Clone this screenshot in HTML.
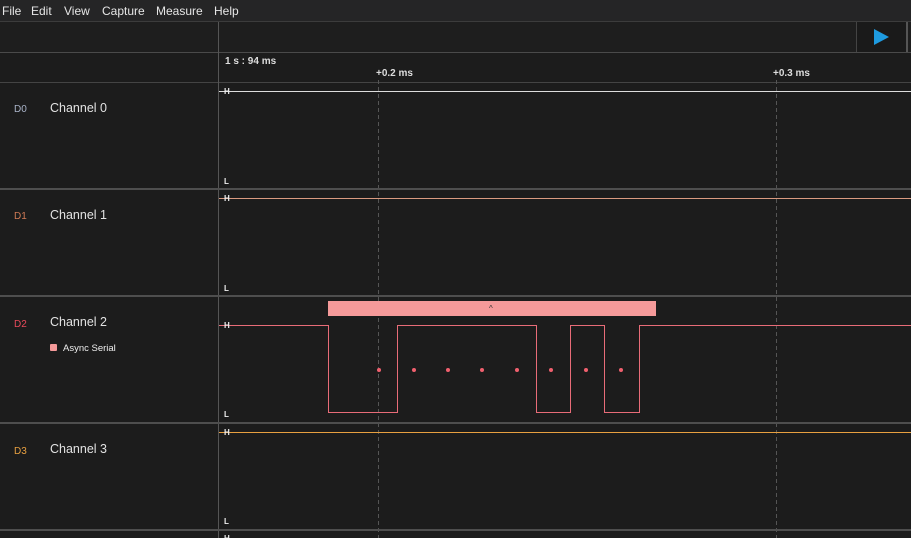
<!DOCTYPE html>
<html><head><meta charset="utf-8"><style>
html,body{margin:0;padding:0;background:#1c1c1c;width:911px;height:538px;overflow:hidden}
svg{display:block}
text{font-family:"Liberation Sans",sans-serif}
</style></head><body>
<svg width="911" height="538" xmlns="http://www.w3.org/2000/svg">
<rect width="911" height="538" fill="#1c1c1c"/>
<rect width="911" height="21" fill="#252526"/>
<g font-size="12" fill="#e6e6e6">
<text x="2" y="15">File</text><text x="31" y="15">Edit</text><text x="64" y="15">View</text><text x="102" y="15">Capture</text><text x="156" y="15">Measure</text><text x="214" y="15">Help</text>
</g>
<rect y="21" width="911" height="1" fill="#3c3c3c"/>
<rect y="22" width="911" height="30" fill="#1e1e1e"/>
<rect y="52" width="911" height="1" fill="#4a4a4a"/>
<rect x="856" y="22" width="50" height="30" fill="#1a1a1a"/>
<rect x="856" y="22" width="1" height="30" fill="#444"/>
<rect x="906" y="22" width="2" height="30" fill="#555"/>
<polygon points="874,29 889,37 874,45" fill="#1e9be0"/>
<rect y="82" width="911" height="1" fill="#444"/>
<rect x="218" y="22" width="1" height="516" fill="#555"/>
<g font-size="10" font-weight="bold" fill="#ddd">
<text x="225" y="64">1 s : 94 ms</text>
<text x="376" y="76">+0.2 ms</text>
<text x="773" y="76">+0.3 ms</text>
</g>
<g stroke="#555" stroke-dasharray="4,3" stroke-width="1">
<line x1="378.5" y1="80" x2="378.5" y2="538"/>
<line x1="776.5" y1="80" x2="776.5" y2="538"/>
</g>
<g fill="#4e4e4e">
<rect y="188" width="911" height="2"/><rect y="295" width="911" height="2"/><rect y="422" width="911" height="2"/><rect y="529" width="911" height="2"/>
</g>
<g font-size="10">
<text x="14" y="112" fill="#a9b3c8">D0</text>
<text x="14" y="219" fill="#d07a55">D1</text>
<text x="14" y="327" fill="#e84a5a">D2</text>
<text x="14" y="454" fill="#e8a040">D3</text>
</g>
<g font-size="12.5" fill="#e2e2e2">
<text x="50" y="112">Channel 0</text><text x="50" y="219">Channel 1</text><text x="50" y="326">Channel 2</text><text x="50" y="453">Channel 3</text>
</g>
<rect x="50" y="344" width="7" height="7" rx="1" fill="#f59a9a"/>
<text x="63" y="351" font-size="9.5" fill="#eee">Async Serial</text>
<line x1="219" y1="91.5" x2="911" y2="91.5" stroke="#ddd"/>
<line x1="219" y1="198.5" x2="911" y2="198.5" stroke="#d99a80"/>
<line x1="219" y1="432.5" x2="911" y2="432.5" stroke="#e8a040"/>
<polyline fill="none" stroke="#e86c78" points="219,325.5 328.5,325.5 328.5,412.5 397.5,412.5 397.5,325.5 536.5,325.5 536.5,412.5 570.5,412.5 570.5,325.5 604.5,325.5 604.5,412.5 639.5,412.5 639.5,325.5 911,325.5"/>
<rect x="328" y="301" width="328" height="15" fill="#f59a9a"/>
<text x="489" y="311" font-size="8" fill="#333">^</text>
<g fill="#f0606e">
<circle cx="379" cy="370" r="2"/><circle cx="414" cy="370" r="2"/><circle cx="448" cy="370" r="2"/><circle cx="482" cy="370" r="2"/><circle cx="517" cy="370" r="2"/><circle cx="551" cy="370" r="2"/><circle cx="586" cy="370" r="2"/><circle cx="621" cy="370" r="2"/>
</g>
<g font-size="8" font-weight="bold" fill="#eee">
<text x="224" y="94">H</text><text x="224" y="184">L</text>
<text x="224" y="201">H</text><text x="224" y="291">L</text>
<text x="224" y="328">H</text><text x="224" y="417">L</text>
<text x="224" y="435">H</text><text x="224" y="524">L</text>
<text x="224" y="541">H</text>
</g>
</svg>
</body></html>
